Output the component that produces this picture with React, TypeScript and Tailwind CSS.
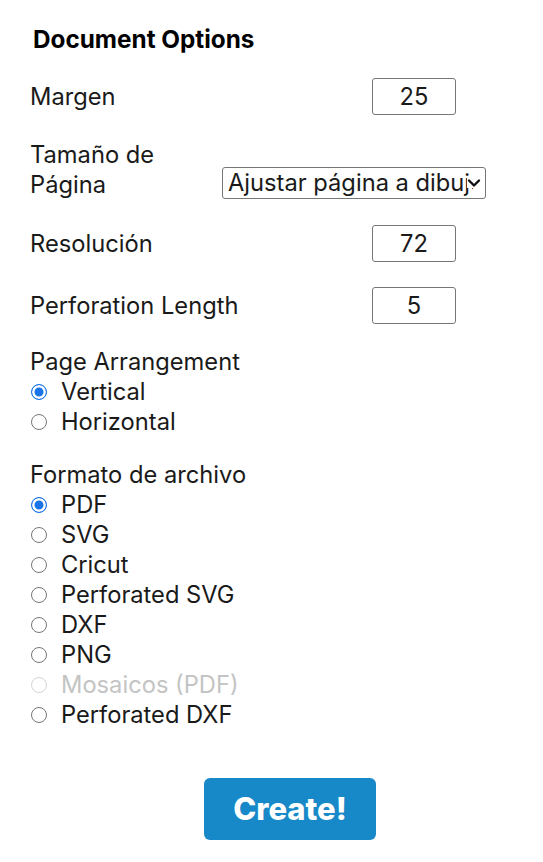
import { useState } from "react";

const formatos = [
  { id: "pdf", label: "PDF" },
  { id: "svg", label: "SVG" },
  { id: "cricut", label: "Cricut" },
  { id: "psvg", label: "Perforated SVG" },
  { id: "dxf", label: "DXF" },
  { id: "png", label: "PNG" },
  { id: "tiles", label: "Mosaicos (PDF)", disabled: true },
  { id: "pdxf", label: "Perforated DXF" },
];

function NumInput({ value }: { value: string }) {
  return (
    <input
      defaultValue={value}
      className="w-[84px] h-[37px] border border-[#767676] rounded-[3px] text-center text-[23.7px] text-[#1a1a1a] outline-none"
    />
  );
}

function Radio({ name, label, checked, disabled, onChange }: { name: string; label: string; checked: boolean; disabled?: boolean; onChange: () => void }) {
  return (
    <label className={`flex items-center h-[30px] ${disabled ? "text-[#c4c4c4]" : "text-[#1a1a1a]"}`}>
      <input
        type="radio"
        name={name}
        checked={checked}
        disabled={disabled}
        onChange={onChange}
        className="appearance-none w-[16px] h-[16px] m-0 ml-[1px] mr-[14px] rounded-full border-[1.5px] border-[#767676] bg-white checked:border-[#1a73e8] checked:bg-[#1a73e8] checked:shadow-[inset_0_0_0_2.5px_white] disabled:border-[#d4d4d4]"
      />
      {label}
    </label>
  );
}

export default function App() {
  const [arreglo, setArreglo] = useState("vertical");
  const [formato, setFormato] = useState("pdf");

  return (
    <div className="px-[30px] pt-[24px] pb-[22px] bg-white font-['Inter','Liberation_Sans',sans-serif] text-[23.7px] leading-[30px] text-[#1a1a1a]">
      <h2 className="ml-[3px] font-bold text-[24.3px] leading-[30px] text-black">Document Options</h2>

      <div className="mt-[24px] flex items-center justify-between mr-[57px]">
        <span>Margen</span>
        <NumInput value="25" />
      </div>

      <div className="mt-[25px] flex items-end justify-between mr-[27px]">
        <span className="w-[150px]">Tamaño de Página</span>
        <div className="relative mb-[1px]">
          <select className="appearance-none block w-[264px] h-[32px] border border-[#767676] rounded-[3px] text-[23.7px] leading-[28px] pl-[5px] pr-[12px] text-[#1a1a1a] bg-white outline-none">
            <option>Ajustar página a dibujo</option>
            <option>Carta</option>
            <option>A4</option>
          </select>
          <svg
            className="absolute right-[5px] top-[11px] pointer-events-none"
            width="14"
            height="10"
            viewBox="0 0 14 10"
            fill="none"
          >
            <rect x="0" y="0" width="14" height="10" fill="white" />
            <path d="M2 2.5 L7 7.5 L12 2.5" stroke="#111" strokeWidth="2.4" strokeLinecap="round" strokeLinejoin="round" />
          </svg>
        </div>
      </div>

      <div className="mt-[25px] flex items-center justify-between mr-[57px]">
        <span>Resolución</span>
        <NumInput value="72" />
      </div>

      <div className="mt-[25px] flex items-center justify-between mr-[57px]">
        <span>Perforation Length</span>
        <NumInput value="5" />
      </div>

      <div className="mt-[23px]">
        <div>Page Arrangement</div>
        <Radio name="arr" label="Vertical" checked={arreglo === "vertical"} onChange={() => setArreglo("vertical")} />
        <Radio name="arr" label="Horizontal" checked={arreglo === "horizontal"} onChange={() => setArreglo("horizontal")} />
      </div>

      <div className="mt-[23px]">
        <div>Formato de archivo</div>
        {formatos.map((f) => (
          <Radio
            key={f.id}
            name="fmt"
            label={f.label}
            disabled={f.disabled}
            checked={formato === f.id}
            onChange={() => setFormato(f.id)}
          />
        ))}
      </div>

      <button className="mt-[48px] ml-[174px] w-[172px] h-[62px] rounded-[6px] bg-[#1788c8] text-white text-[31px] font-extrabold">
        Create!
      </button>
    </div>
  );
}
